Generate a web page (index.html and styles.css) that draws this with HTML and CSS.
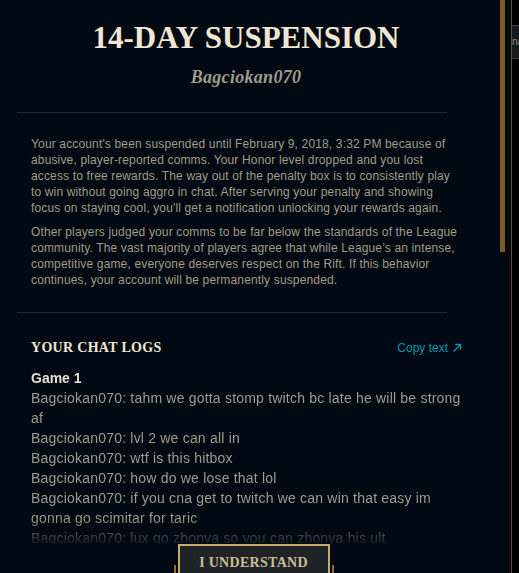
FILE: index.html
```html
<!DOCTYPE html>
<html lang="en">
<head>
<meta charset="utf-8">
<title>14-Day Suspension</title>
<link rel="stylesheet" href="styles.css">
</head>
<body>
<div class="app">
  <div class="modal">
    <div class="main">
      <header class="head">
        <h1 class="title">14-DAY SUSPENSION</h1>
        <div class="username">Bagciokan070</div>
      </header>
      <hr class="divider">
      <section class="notice">
        <p>Your account's been suspended until February 9, 2018, 3:32 PM because of abusive, player-reported comms. Your Honor level dropped and you lost access to free rewards. The way out of the penalty box is to consistently play to win without going aggro in chat. After serving your penalty and showing focus on staying cool, you'll get a notification unlocking your rewards again.</p>
        <p>Other players judged your comms to be far below the standards of the League community. The vast majority of players agree that while League’s an intense, competitive game, everyone deserves respect on the Rift. If this behavior continues, your account will be permanently suspended.</p>
      </section>
      <hr class="divider">
      <div class="logs-head">
        <h2 class="logs-title">YOUR CHAT LOGS</h2>
        <a class="copy">Copy text <svg class="arrow" width="10" height="10" viewBox="0 0 10 10"><path d="M1.5 8.5 L8.5 1.5 M3.2 1.5 H8.5 V6.8" fill="none" stroke="currentColor" stroke-width="1.3"/></svg></a>
      </div>
      <div class="log">
        <div class="game">Game 1</div>
        <div class="line">Bagciokan070: tahm we gotta stomp twitch bc late he will be strong af</div>
        <div class="line">Bagciokan070: lvl 2 we can all in</div>
        <div class="line">Bagciokan070: wtf is this hitbox</div>
        <div class="line">Bagciokan070: how do we lose that lol</div>
        <div class="line">Bagciokan070: if you cna get to twitch we can win that easy im gonna go scimitar for taric</div>
        <div class="line">Bagciokan070: lux go zhonya so you can zhonya his ult</div>
        <div class="line">Bagciokan070: gg</div>
      </div>
      <footer class="foot">
        <div class="btn-wrap">
          <button class="btn">I UNDERSTAND</button>
        </div>
      </footer>
    </div>
    <div class="scrollbar"><div class="thumb"></div></div>
  </div>
  <div class="side">
    <div class="tab">na</div>
  </div>
</div>
</body>
</html>
```
FILE: styles.css
```css
* { box-sizing: border-box; }
html, body { margin: 0; padding: 0; }
body {
  background: #000;
  width: 519px;
  height: 573px;
  overflow: hidden;
}
.app {
  display: flex;
  height: 573px;
}
.modal {
  width: 512px;
  height: 573px;
  background: #010a13;
  border-right: 1px solid #6a4f25;
  display: flex;
  overflow: hidden;
}
.main {
  width: 500px;
  height: 573px;
  padding: 0 39px 0 31px;
  display: flex;
  flex-direction: column;
  overflow: hidden;
}
.scrollbar {
  width: 5px;
  margin-right: 6px;
  flex-shrink: 0;
}
.thumb {
  height: 252px;
  background: #7a5a2a;
}
.side {
  flex: 1;
  background: #000;
  overflow: hidden;
}
.tab {
  margin-top: 25px;
  height: 34px;
  background: #16191d;
  border-top: 1px solid #3c3c41;
  border-bottom: 1px solid #4a3a1c;
  color: #8c8a80;
  font: 10px/32px "Liberation Sans", sans-serif;
  white-space: nowrap;
  overflow: hidden;
}

.head {
  text-align: center;
  padding-top: 20px;
}
.title {
  margin: 0;
  font-family: "Liberation Serif", serif;
  font-weight: 700;
  font-size: 31px;
  line-height: 36px;
  color: #f0e6d2;
  letter-spacing: 0;
}
.username {
  margin-top: 9px;
  font-family: "Liberation Serif", serif;
  font-weight: 700;
  font-style: italic;
  font-size: 18px;
  line-height: 24px;
  color: #a09b8c;
  letter-spacing: 0.3px;
}
.divider {
  border: 0;
  height: 1px;
  background: #23282d;
  margin: 23px 14px 0 -14px;
  flex-shrink: 0;
}
.notice {
  margin-top: 23px;
  font-family: "Liberation Sans", sans-serif;
  font-size: 12px;
  line-height: 16px;
  letter-spacing: 0.15px;
  color: #a09b8c;
}
.notice p { margin: 0; }
.notice p + p { margin-top: 8px; }
.notice + .divider { margin-top: 24px; }

.logs-head {
  margin-top: 26px;
  display: flex;
  justify-content: space-between;
  align-items: center;
  height: 18px;
  flex-shrink: 0;
}
.logs-title {
  margin: 0;
  font-family: "Liberation Serif", serif;
  font-weight: 700;
  font-size: 14px;
  line-height: 18px;
  letter-spacing: 0.3px;
  color: #f0e6d2;
}
.copy {
  font-family: "Liberation Sans", sans-serif;
  font-size: 12px;
  line-height: 16px;
  color: #0397ab;
  display: flex;
  align-items: center;
  gap: 4px;
  margin-right: -1px;
}
.arrow { display: block; }

.log {
  margin-top: 11px;
  flex: 1;
  overflow: hidden;
  font-family: "Liberation Sans", sans-serif;
  font-size: 14px;
  line-height: 20px;
  letter-spacing: 0.2px;
  color: #a09b8c;
  -webkit-mask-image: linear-gradient(to bottom, #000 calc(100% - 26px), rgba(0,0,0,0.12) 100%);
  mask-image: linear-gradient(to bottom, #000 calc(100% - 26px), rgba(0,0,0,0.12) 100%);
}
.game {
  font-weight: 700;
  letter-spacing: 0;
  color: #e8e0cf;
}
.foot {
  height: 29px;
  flex-shrink: 0;
  display: flex;
  justify-content: center;
  margin-left: -31px;
  margin-right: -39px;
  padding-left: 7px;
}
.btn-wrap {
  position: relative;
  width: 152px;
  height: 36px;
}
.btn-wrap::before,
.btn-wrap::after {
  content: "";
  position: absolute;
  top: 21px;
  width: 2px;
  height: 20px;
  background: #8a6d3b;
}
.btn-wrap::before { left: -4px; }
.btn-wrap::after { right: -4px; }
.btn {
  width: 152px;
  height: 36px;
  border: 2px solid #c8aa6e;
  border-bottom-color: #785a28;
  background: #1e2328;
  color: #cdbe91;
  font-family: "Liberation Serif", serif;
  font-weight: 700;
  font-size: 14px;
  line-height: 18px;
  letter-spacing: 0.3px;
  padding: 2px 0 0;
  display: block;
  text-align: center;
  vertical-align: top;
}
```
